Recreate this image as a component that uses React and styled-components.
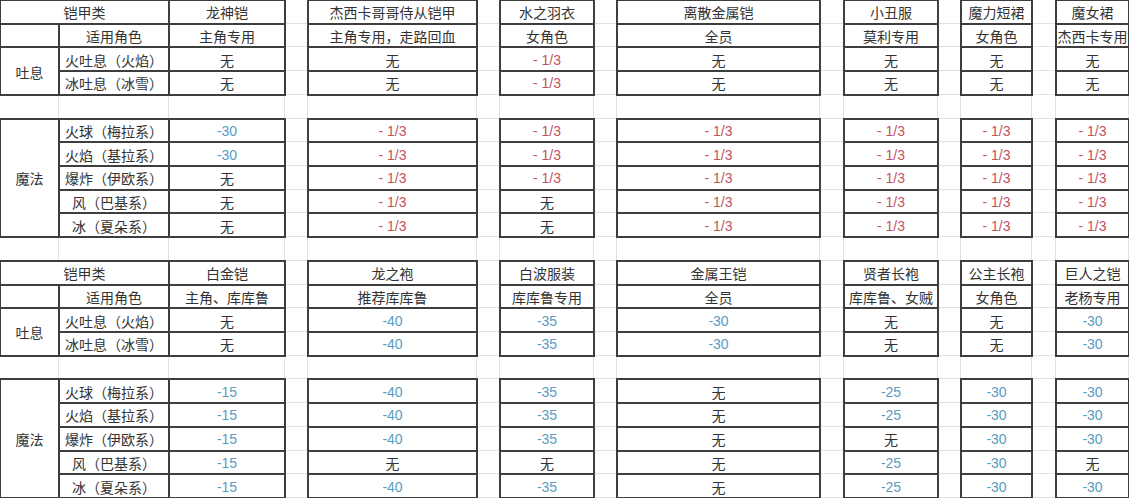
import React, { Fragment } from 'react';
import styled, { createGlobalStyle } from 'styled-components';

const GlobalStyle = createGlobalStyle`
  html, body {
    margin: 0;
    padding: 0;
    background: #fff;
  }
  body {
    font-family: "Noto Sans CJK SC", "Noto Sans", sans-serif;
  }
`;

// column widths of the sheet, gap columns included
const COLS = [59, 110, 116, 23, 169, 23, 94, 23, 203, 24, 94, 23, 71, 24, 73];

const BREATH = ['火吐息（火焰）', '冰吐息（冰雪）'];
const MAGIC = ['火球（梅拉系）', '火焰（基拉系）', '爆炸（伊欧系）', '风（巴基系）', '冰（夏朵系）'];

const tableOne = {
  names: ['龙神铠', '杰西卡哥哥侍从铠甲', '水之羽衣', '离散金属铠', '小丑服', '魔力短裙', '魔女裙'],
  roles: ['主角专用', '主角专用，走路回血', '女角色', '全员', '莫利专用', '女角色', '杰西卡专用'],
  breath: [
    ['无', '无', '- 1/3', '无', '无', '无', '无'],
    ['无', '无', '- 1/3', '无', '无', '无', '无'],
  ],
  magic: [
    ['-30', '- 1/3', '- 1/3', '- 1/3', '- 1/3', '- 1/3', '- 1/3'],
    ['-30', '- 1/3', '- 1/3', '- 1/3', '- 1/3', '- 1/3', '- 1/3'],
    ['无', '- 1/3', '- 1/3', '- 1/3', '- 1/3', '- 1/3', '- 1/3'],
    ['无', '- 1/3', '无', '- 1/3', '- 1/3', '- 1/3', '- 1/3'],
    ['无', '- 1/3', '无', '- 1/3', '- 1/3', '- 1/3', '- 1/3'],
  ],
};

const tableTwo = {
  names: ['白金铠', '龙之袍', '白波服装', '金属王铠', '贤者长袍', '公主长袍', '巨人之铠'],
  roles: ['主角、库库鲁', '推荐库库鲁', '库库鲁专用', '全员', '库库鲁、女贼', '女角色', '老杨专用'],
  breath: [
    ['无', '-40', '-35', '-30', '无', '无', '-30'],
    ['无', '-40', '-35', '-30', '无', '无', '-30'],
  ],
  magic: [
    ['-15', '-40', '-35', '无', '-25', '-30', '-30'],
    ['-15', '-40', '-35', '无', '-25', '-30', '-30'],
    ['-15', '-40', '-35', '无', '无', '-30', '-30'],
    ['-15', '无', '无', '无', '-25', '-30', '无'],
    ['-15', '-40', '-35', '无', '-25', '-30', '-30'],
  ],
};

const Sheet = styled.div`
  display: grid;
  grid-template-columns: ${COLS.map((w) => w + 'px').join(' ')};
  grid-template-rows: repeat(21, 1fr);
  width: 1129px;
  height: 498px;
  background: #fff;
`;

const Blank = styled.div`
  box-shadow: inset -1px -1px 0 #e2e2e2;
`;

const Cell = styled.div`
  position: relative;
  z-index: 1;
  display: flex;
  align-items: center;
  justify-content: center;
  padding-top: 1px;
  grid-column: span ${(p) => p.$cols || 1};
  grid-row: span ${(p) => p.$rows || 1};
  box-shadow: 0 0 0 1px #3e3e3e, inset 0 0 0 1px #3e3e3e;
  font-size: 14px;
  color: #333;
  white-space: nowrap;
`;

const Num = styled.span`
  font-family: "Liberation Sans", Arial, sans-serif;
  font-size: 14px;
  color: ${(p) => (p.$tone === 'red' ? '#c4525c' : '#5a9bc1')};
`;

function Value({ text }) {
  if (text.startsWith('-')) {
    return <Num $tone={text.includes('/') ? 'red' : 'blue'}>{text}</Num>;
  }
  return text;
}

function Values({ list }) {
  return list.map((v, i) => (
    <Fragment key={i}>
      {i > 0 && <Blank />}
      <Cell>
        <Value text={v} />
      </Cell>
    </Fragment>
  ));
}

function BlankRow() {
  return COLS.map((_, i) => <Blank key={i} />);
}

function ArmorTable({ data }) {
  return (
    <>
      <Cell $cols={2}>铠甲类</Cell>
      <Values list={data.names} />

      <Cell />
      <Cell>适用角色</Cell>
      <Values list={data.roles} />

      <Cell $rows={2}>吐息</Cell>
      {data.breath.map((row, i) => (
        <Fragment key={i}>
          <Cell>{BREATH[i]}</Cell>
          <Values list={row} />
        </Fragment>
      ))}

      <BlankRow />

      <Cell $rows={5}>魔法</Cell>
      {data.magic.map((row, i) => (
        <Fragment key={i}>
          <Cell>{MAGIC[i]}</Cell>
          <Values list={row} />
        </Fragment>
      ))}
    </>
  );
}

export default function App() {
  return (
    <>
      <GlobalStyle />
      <Sheet>
        <ArmorTable data={tableOne} />
        <BlankRow />
        <ArmorTable data={tableTwo} />
      </Sheet>
    </>
  );
}
